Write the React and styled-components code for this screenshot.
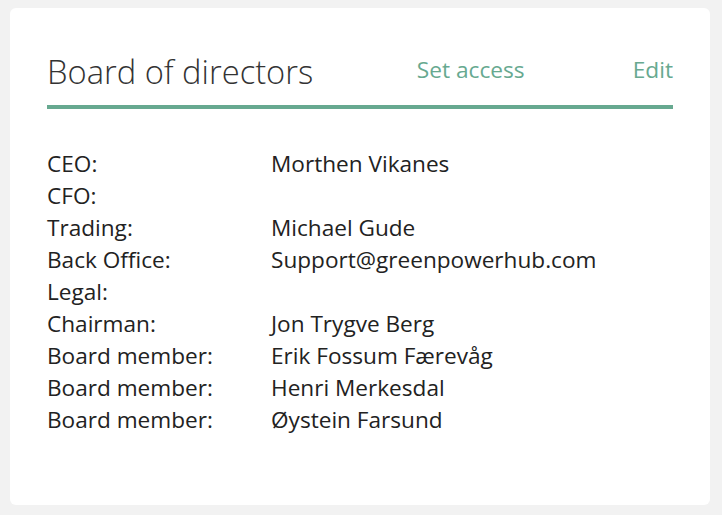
import React from "react";
import styled, { createGlobalStyle } from "styled-components";

const GlobalStyle = createGlobalStyle`
  html, body {
    margin: 0;
    padding: 0;
    background: #f2f2f2;
  }
  body {
    font-family: "Open Sans", "Noto Sans", sans-serif;
    color: #222;
  }
`;

const directors = [
  { role: "CEO", name: "Morthen Vikanes" },
  { role: "CFO", name: "" },
  { role: "Trading", name: "Michael Gude" },
  { role: "Back Office", name: "Support@greenpowerhub.com" },
  { role: "Legal", name: "" },
  { role: "Chairman", name: "Jon Trygve Berg" },
  { role: "Board member", name: "Erik Fossum Færevåg" },
  { role: "Board member", name: "Henri Merkesdal" },
  { role: "Board member", name: "Øystein Farsund" },
];

const App = () => {
  return (
    <>
      <GlobalStyle />
      <Page>
        <Card>
          <Header>
            <Title>Board of directors</Title>
            <Actions>
              <LinkButton>Set access</LinkButton>
              <LinkButton>Edit</LinkButton>
            </Actions>
          </Header>
          <List>
            {directors.map((d, i) => (
              <Row key={i}>
                <Label>{d.role}:</Label>
                <Value>{d.name}</Value>
              </Row>
            ))}
          </List>
        </Card>
      </Page>
    </>
  );
};

export default App;

const Page = styled.div`
  box-sizing: border-box;
  width: 722px;
  height: 515px;
  padding: 8px 12px 10px 10px;
`;

const Card = styled.div`
  box-sizing: border-box;
  height: 100%;
  background: #fff;
  border-radius: 6px;
  padding: 44px 37px 0 37px;
`;

const Header = styled.div`
  display: flex;
  align-items: flex-end;
  justify-content: space-between;
  padding-bottom: 13px;
  border-bottom: 4px solid #67a990;
`;

const Title = styled.h2`
  margin: 0;
  font-size: 32.7px;
  font-weight: 300;
  line-height: 40px;
  color: #333;
`;

const Actions = styled.div`
  display: flex;
  gap: 108px;
  padding-bottom: 8px;
`;

const LinkButton = styled.span`
  font-size: 22.7px;
  line-height: 28px;
  color: #67a990;
  cursor: pointer;
`;

const List = styled.div`
  display: flex;
  flex-direction: column;
  padding-top: 39px;
`;

const Row = styled.div`
  display: grid;
  grid-template-columns: 224px 1fr;
  font-size: 22.6px;
  line-height: 32px;
  height: 32px;
`;

const Label = styled.span`
  color: #222;
`;

const Value = styled.span`
  color: #222;
`;
